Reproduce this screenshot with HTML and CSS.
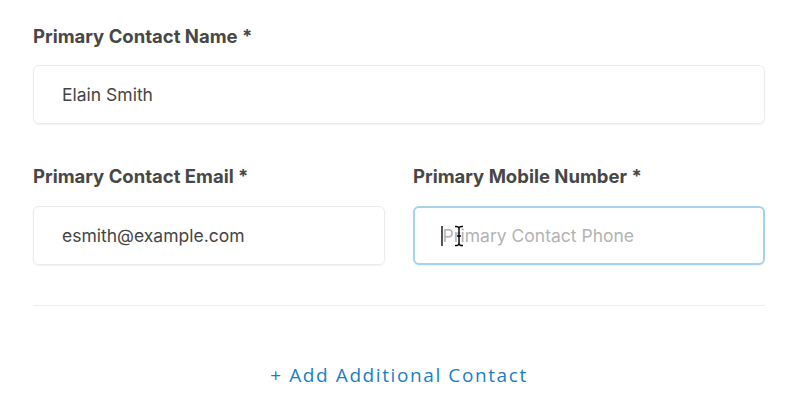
FILE: index.html
```html
<!DOCTYPE html>
<html>
<head>
<meta charset="utf-8">
<link rel="stylesheet" href="styles.css">
</head>
<body>
<div class="form">
  <div class="field">
    <div class="label">Primary Contact Name *</div>
    <div class="input"><span class="value">Elain Smith</span></div>
  </div>
  <div class="row">
    <div class="field">
      <div class="label">Primary Contact Email *</div>
      <div class="input"><span class="value">esmith@example.com</span></div>
    </div>
    <div class="field">
      <div class="label">Primary Mobile Number *</div>
      <div class="input focused">
        <span class="caret"></span><span class="placeholder">Primary Contact Phone</span>
        <svg class="ibeam" width="10" height="22" viewBox="0 0 10 22"><path d="M1 1.5 Q5 1 5 4 L5 18 Q5 21 1 20.5 M9 1.5 Q5 1 5 4 M5 18 Q5 21 9 20.5 M3 11 H7" fill="none" stroke="#000" stroke-width="1.4"/></svg>
      </div>
    </div>
  </div>
  <div class="divider"></div>
  <div class="add">+ Add Additional Contact</div>
</div>
</body>
</html>
```
FILE: styles.css
```css
html, body { margin: 0; background: #fff; }
body { font-family: Inter, "Open Sans", sans-serif; }
.form { padding: 24px 35px 0 33px; }
.field { display: flex; flex-direction: column; }
.label { font-size: 18.5px; line-height: 24px; font-weight: 700; color: #474747; margin-bottom: 17px; }
.input { position: relative; height: 59px; box-sizing: border-box; border: 1.5px solid #e9ecef; border-radius: 6px; box-shadow: 0 1px 2px rgba(0,0,0,0.06); display: flex; align-items: center; padding-left: 28px; font-size: 17.5px; color: #454545; }
.row { display: grid; grid-template-columns: 1fr 1fr; gap: 28px; margin-top: 40px; }
.row .label { margin-bottom: 18px; }
.input.focused { border: 2px solid #a4d2ef; padding-left: 26px; }
.placeholder { color: #b3b3b3; }
.caret { display: inline-block; width: 1.5px; height: 20px; background: #555; margin-right: 0; }
.ibeam { position: absolute; left: 39px; top: 17px; }
.divider { height: 1px; background: #eceef0; margin-top: 40px; }
.add { text-align: center; margin-top: 56px; font-family: "Open Sans", sans-serif; font-size: 19px; font-weight: 500; letter-spacing: 1.6px; color: #1a80c4; }
```
